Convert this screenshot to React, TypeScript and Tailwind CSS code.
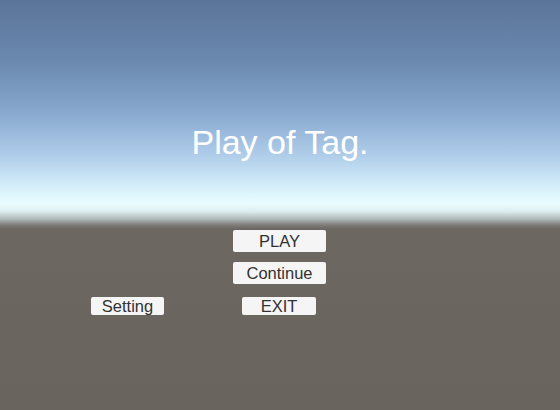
const buttonClass =
  "flex items-center justify-center rounded-[2px] bg-[#f5f5f5] text-[16.5px] leading-none text-[#323232]";

export default function App() {
  return (
    <div
      className="flex h-[410px] w-[560px] flex-col overflow-hidden bg-[linear-gradient(to_bottom,#5c7499_0px,#6a88ae_60px,#8aaad0_115px,#afcdea_155px,#d6effb_188px,#e9fdff_203px,#dfeff1_211px,#b0babb_219px,#7e7c79_225px,#6c6761_229px,#6a645f_410px)] pt-[120px] font-['Liberation_Sans',Arial,sans-serif]"
    >
      {/* title */}
      <h1 className="text-center text-[34px] leading-[44px] font-normal text-white">
        Play of Tag.
      </h1>

      {/* menu buttons */}
      <div className="mt-[66px] flex flex-col">
        <div className="pl-[233px]">
          <button className={`${buttonClass} h-[22px] w-[93px]`}>PLAY</button>
        </div>
        <div className="mt-[10px] pl-[233px]">
          <button className={`${buttonClass} h-[22px] w-[93px]`}>Continue</button>
        </div>
        <div className="mt-[13px] flex pl-[91px]">
          <button className={`${buttonClass} h-[18px] w-[73px]`}>Setting</button>
          <button className={`${buttonClass} ml-[78px] h-[18px] w-[74px]`}>EXIT</button>
        </div>
      </div>
    </div>
  );
}
